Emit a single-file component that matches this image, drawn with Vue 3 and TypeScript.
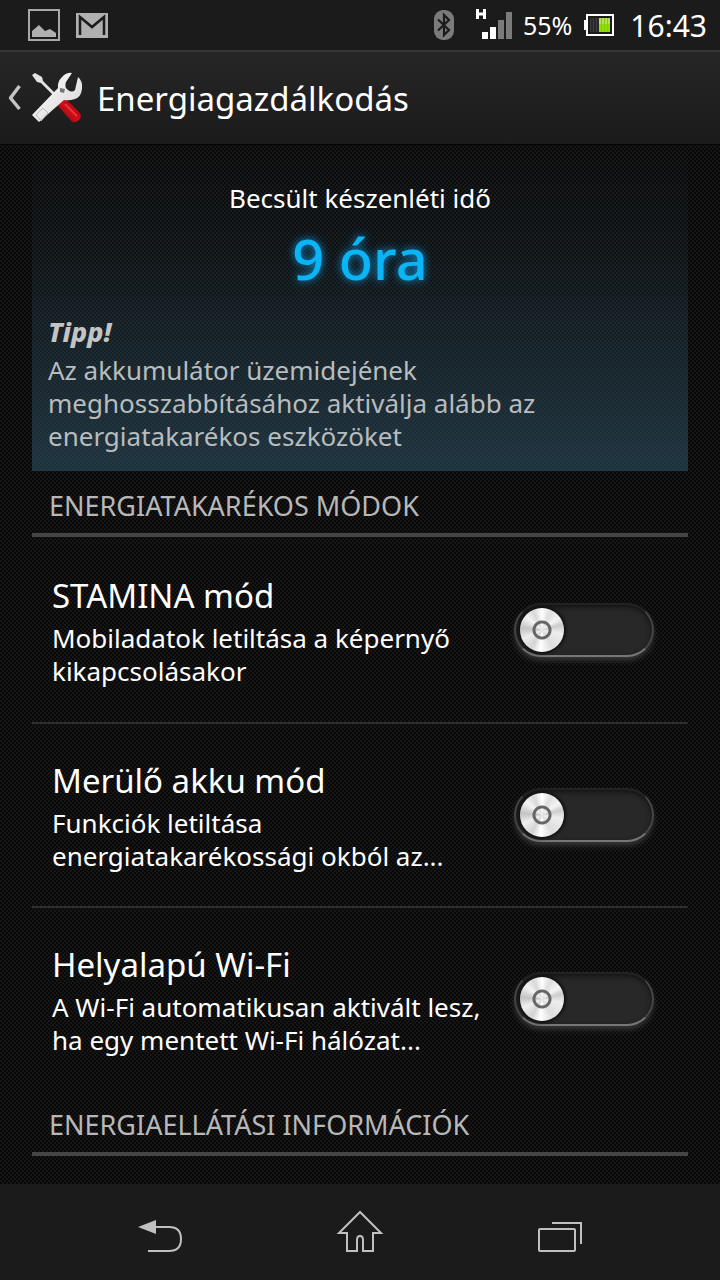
<script setup lang="ts">
import { ref } from 'vue'

interface Mode {
  id: string
  title: string
  detail: string
  on: boolean
}

const modes = ref<Mode[]>([
  { id: 'stamina', title: 'STAMINA mód', detail: 'Mobiladatok letiltása a képernyő\nkikapcsolásakor', on: false },
  { id: 'low-battery', title: 'Merülő akku mód', detail: 'Funkciók letiltása\nenergiatakarékossági okból az...', on: false },
  { id: 'wifi', title: 'Helyalapú Wi-Fi', detail: 'A Wi-Fi automatikusan aktivált lesz,\nha egy mentett Wi-Fi hálózat...', on: false },
])
</script>

<template>
  <div class="screen">
    <div class="status">
      <svg class="s-image" width="32" height="32" viewBox="0 0 32 32">
        <rect x="1" y="1" width="30" height="30" fill="none" stroke="#a8a8a8" stroke-width="2" />
        <path d="M4 28v-6l7-6 6 6 5-2 6 4v4z" fill="#b0b0b0" />
      </svg>
      <svg class="s-mail" width="32" height="25" viewBox="0 0 32 25">
        <rect width="32" height="25" fill="#b0b0b0" />
        <path d="M4 22V4L16 14 28 4V22" fill="none" stroke="#1b1b1b" stroke-width="2.500" />
      </svg>
      <span class="spacer"></span>
      <svg class="s-bt" width="20" height="30" viewBox="0 0 20 30">
        <rect width="20" height="30" rx="9" fill="#7b7b7b" />
        <path d="M4 9.500L15 20l-5 5V5l5 5L4 20.500" fill="none" stroke="#1b1b1b" stroke-width="2.200" />
      </svg>
      <svg class="s-signal" width="38" height="32" viewBox="0 0 38 32">
        <path d="M2.500 0v10M9.500 0v10M2.500 5h8" fill="none" stroke="#fff" stroke-width="3" />
        <rect x="7" y="23" width="6" height="7" fill="#fff" />
        <rect x="15" y="18" width="6" height="12" fill="#fff" />
        <rect x="23" y="11" width="6" height="19" fill="#7b7b7b" />
        <rect x="31" y="3" width="6" height="27" fill="#7b7b7b" />
      </svg>
      <span class="percent">55%</span>
      <svg class="s-battery" width="30" height="22" viewBox="0 0 30 22">
        <rect x="3" y="1" width="26" height="20" fill="#1b1b1b" stroke="#fff" stroke-width="2" />
        <rect x="0" y="6" width="3" height="10" fill="#fff" />
        <rect x="6" y="4" width="9" height="14" fill="#3c3c3c" />
        <path d="M8 4v14M11 4v14M14 4v14" stroke="#161616" />
        <rect x="15" y="4" width="11" height="14" fill="#8fe000" />
        <rect x="15" y="4" width="11" height="6" fill="#b6e254" />
        <path d="M17.500 4v14M20.500 4v14M23.500 4v14" stroke="#84cc08" />
      </svg>
      <span class="clock">16:43</span>
    </div>

    <header class="bar">
      <button class="up" type="button" aria-label="Vissza">
        <svg width="14" height="28" viewBox="0 0 14 28">
          <path d="M12.500 2L3.500 14l9 11" fill="none" stroke="#c4c4c4" stroke-width="3.500" stroke-linejoin="round" />
        </svg>
        <svg class="tools" width="52" height="52" viewBox="0 0 52 52">
          <defs>
            <linearGradient id="steel" x1="0" y1="0" x2="1" y2="1">
              <stop offset="0" stop-color="#fff" />
              <stop offset="1" stop-color="#d4d4d4" />
            </linearGradient>
            <linearGradient id="grip" x1="0" y1="1" x2="1" y2="0">
              <stop offset="0" stop-color="#5a0004" />
              <stop offset=".5" stop-color="#d0101a" />
              <stop offset="1" stop-color="#8d0008" />
            </linearGradient>
          </defs>
          <path d="M1 3l3-2 7 4 1 4 13 13-2 2-13-13-4-1z" fill="#e4e4e4" />
          <path d="M26 32l8-6 15 15q2 4-1 7t-7 2L28 35z" fill="url(#grip)" />
          <path d="M34 32l12 12" stroke="#ff5058" stroke-width="1.500" opacity=".7" />
          <path d="M1 43l26-27q-1-6 4-11t10-4l-6 9q-2 5 2 8t7 0l3-13q5 4 4 12t-7 10-11 1L8 50z" fill="url(#steel)" />
          <path d="M5 43l7-7 5 5-7 8z" fill="none" stroke="#bbb" stroke-linejoin="round" />
          <path d="M29 16l5 1-1 4-4-1z" fill="#777" />
        </svg>
      </button>
      <h1>Energiagazdálkodás</h1>
    </header>

    <main class="content">
      <section class="card">
        <p class="estimate">Becsült készenléti idő</p>
        <p class="hours">9 óra</p>
        <p class="tip">Tipp!</p>
        <p class="advice">Az akkumulátor üzemidejének<br />meghosszabbításához aktiválja alább az<br />energiatakarékos eszközöket</p>
      </section>

      <h2>ENERGIATAKARÉKOS MÓDOK</h2>
      <ul>
        <li v-for="mode in modes" :key="mode.id">
          <label :for="mode.id">
            <span class="title">{{ mode.title }}</span>
            <span class="detail">{{ mode.detail }}</span>
          </label>
          <input :id="mode.id" v-model="mode.on" class="switch" type="checkbox" role="switch" />
        </li>
      </ul>
      <h2>ENERGIAELLÁTÁSI INFORMÁCIÓK</h2>
    </main>

    <nav class="nav">
      <button type="button" aria-label="Vissza">
        <svg width="48" height="48" viewBox="0 0 48 48">
          <path d="M2 15l18-7v14z" fill="#c0c0c0" />
          <path d="M19 15h14c8 0 12 4 12 12s-4 12-12 12H12" fill="none" stroke="#c0c0c0" stroke-width="2" />
        </svg>
      </button>
      <button type="button" aria-label="Kezdőképernyő">
        <svg width="48" height="48" viewBox="0 0 48 48">
          <path d="M24 0L3 21h8v18h10V28q0-4 3-4t3 4v11h10V21h8z" fill="none" stroke="#c0c0c0" stroke-width="2" />
        </svg>
      </button>
      <button type="button" aria-label="Legutóbbi alkalmazások">
        <svg width="48" height="48" viewBox="0 0 48 48">
          <rect x="3" y="17" width="36" height="22" rx="1" fill="none" stroke="#c0c0c0" stroke-width="2" />
          <path d="M16 11h29v21" fill="none" stroke="#c0c0c0" stroke-width="2" />
        </svg>
      </button>
    </nav>
  </div>
</template>

<style>
body {
  background: #0f0f0f;
}
</style>

<style scoped>
.screen {
  display: flex;
  flex-direction: column;
  min-height: 100vh;
  color: #fff;
  font-family: "Noto Sans", "Open Sans", sans-serif;
  background: repeating-conic-gradient(#080808 0 25%, #161616 0 50%) 0 0 / 4px 4px;
}
p,
h1,
h2,
ul {
  margin: 0;
  padding: 0;
  font-weight: 400;
}
button {
  padding: 0;
  border: 0;
  background: none;
}
svg {
  display: block;
  flex: none;
  overflow: visible;
}
.status {
  display: flex;
  align-items: center;
  height: 50px;
  padding: 0 13px 0 28px;
  background: #1b1b1b;
}
.s-mail {
  margin-left: 16px;
}
.spacer {
  flex: 1;
}
.s-signal {
  margin: 0 10px 0 21px;
}
.percent {
  font-size: 25px;
}
.s-battery {
  margin: 0 16px 0 12px;
}
.clock {
  font-size: 30px;
}
.bar {
  display: flex;
  align-items: center;
  height: 95px;
  box-sizing: border-box;
  padding: 0 7px;
  border-top: 2px solid #353535;
  border-bottom: 1px solid #050505;
  background: linear-gradient(#262626, #1b1b1b);
}
.up {
  display: flex;
  align-items: center;
  gap: 10px;
}
h1 {
  margin-left: 14px;
  font-size: 33px;
}
.content {
  flex: 1;
  padding: 1px 32px 0;
}
.card {
  height: 325px;
  box-sizing: border-box;
  padding: 34px 16px 16px;
  background: linear-gradient(rgba(50, 90, 110, 0), rgba(50, 90, 115, 0.12) 33%, rgba(50, 90, 112, 0.52));
}
.estimate {
  font-size: 26px;
  line-height: 36px;
  text-align: center;
}
.hours {
  color: #0ab4f5;
  font-size: 56px;
  font-weight: 500;
  line-height: 84px;
  text-align: center;
  text-shadow: 0 0 8px #0a9be0;
}
.tip {
  margin-top: 14px;
  color: #c4c4c4;
  font-size: 27px;
  font-style: italic;
  font-weight: 800;
  line-height: 36px;
}
.advice {
  margin-top: 4px;
  color: #b8bcbe;
  font-size: 26px;
  line-height: 33px;
}
h2 {
  height: 50px;
  padding: 12px 17px 0;
  border-bottom: 4px solid #454545;
  color: #b8b8b8;
  font-size: 27px;
  line-height: 46px;
}
ul {
  list-style: none;
}
li {
  display: flex;
  align-items: center;
  justify-content: space-between;
  height: 185px;
  box-sizing: border-box;
  padding: 0 34px 0 20px;
}
li + li {
  height: 184px;
  border-top: 2px solid #2e2e2e;
}
label {
  display: flex;
  flex-direction: column;
}
.title {
  font-size: 33px;
  line-height: 48px;
}
.detail {
  margin-top: 2px;
  font-size: 26px;
  line-height: 33px;
  white-space: pre;
}
.switch {
  appearance: none;
  flex: none;
  width: 140px;
  height: 54px;
  margin: 0;
  padding: 3px 4px;
  box-sizing: border-box;
  border: 2px solid #444;
  border-top-color: #222;
  border-bottom-color: #777;
  border-radius: 27px;
  background: #282828;
  box-shadow: 0 4px 6px -1px #3c3c3c, inset 0 2px 5px #111;
}
.switch::before {
  content: "";
  display: block;
  width: 44px;
  height: 44px;
  border-radius: 50%;
  background:
    radial-gradient(circle, transparent 6px, #666 7px 9px, transparent 10px),
    conic-gradient(#fff, #ddd 25deg, #f4f4f4 55deg, #ccc 75deg, #eee 100deg, #ddd 150deg, #fff 185deg, #d4d4d4 210deg, #eee 245deg, #c4c4c4 275deg, #f4f4f4 310deg, #d8d8d8 335deg, #fff);
  box-shadow: 0 0 3px 2px #111;
}
.switch:checked::before {
  margin-left: auto;
}
.nav {
  display: flex;
  align-items: center;
  justify-content: space-around;
  height: 96px;
  padding: 8px 60px 0;
  box-sizing: border-box;
  background: #1b1b1b;
}
</style>
